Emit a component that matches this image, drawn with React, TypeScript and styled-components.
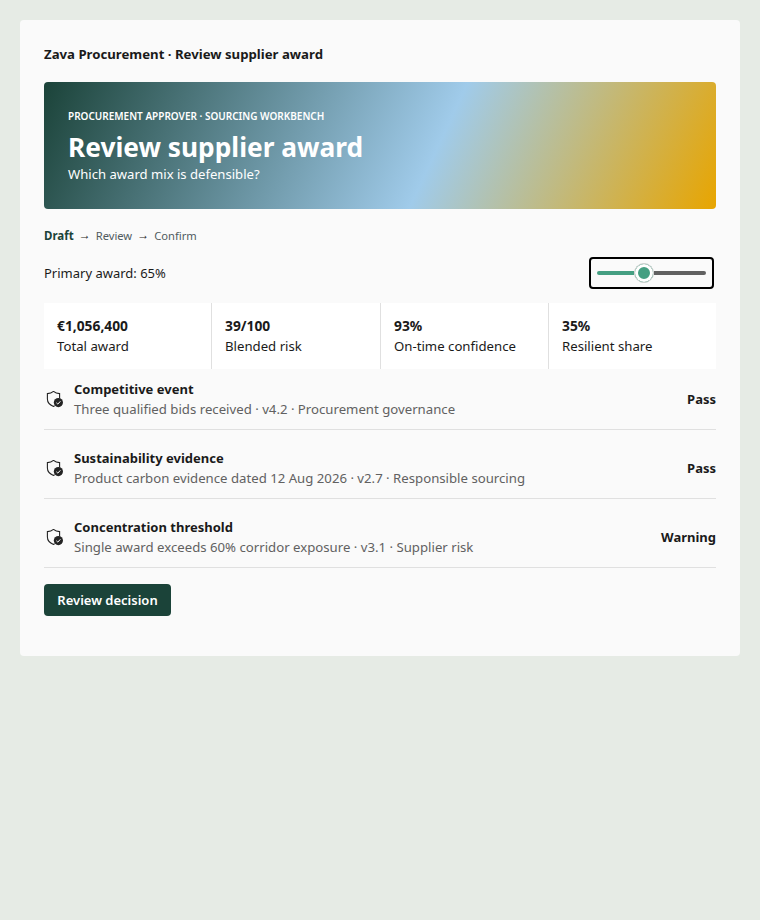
import React from "react";
import styled, { createGlobalStyle } from "styled-components";

const FONT = `"Noto Sans", "Open Sans", "Liberation Sans", sans-serif`;

const GlobalStyle = createGlobalStyle`
  * {
    box-sizing: border-box;
  }
  body {
    margin: 0;
    min-height: 920px;
    background-color: #e6ebe5;
    font-family: ${FONT};
    color: #1a1a1a;
  }
`;

const Page = styled.div`
  padding: 20px;
`;
const Card = styled.main`
  background-color: #fafafa;
  border-radius: 4px;
  padding: 24px;
  height: 636px;
`;
const Title = styled.h1`
  margin: 0 0 18px;
  height: 20px;
  font-size: 13.2px;
  line-height: 20px;
  font-weight: 700;
  color: #1a1a1a;
`;
const Hero = styled.section`
  height: 127px;
  padding: 24px;
  border-radius: 4px;
  color: #fff;
  background: linear-gradient(115deg, #1b4339 0%, #a0cbea 58%, #e8a500 100%);
`;
const Eyebrow = styled.div`
  font-size: 10px;
  line-height: 20px;
  font-weight: 600;
  white-space: nowrap;
`;
const HeroTitle = styled.h2`
  margin: 3px 0 0;
  font-size: 26.3px;
  line-height: 36px;
  font-weight: 700;
`;
const HeroSub = styled.div`
  font-size: 13.1px;
  line-height: 18px;
`;
const Steps = styled.nav`
  display: flex;
  align-items: center;
  gap: 5px;
  height: 18px;
  margin-top: 17px;
  font-size: 11.2px;
  color: #505a60;
`;
const Step = styled.span<{ $active?: boolean }>`
  font-size: ${(props) => (props.$active ? "11.5px" : "11.2px")};
  font-weight: ${(props) => (props.$active ? 700 : 400)};
  color: ${(props) => (props.$active ? "#1b4339" : "#505a60")};
`;
const Arrow = styled.span`
  font-family: "Liberation Sans", sans-serif;
  font-size: 12px;
  color: #1a1a1a;
`;
const AwardRow = styled.div`
  display: flex;
  justify-content: space-between;
  align-items: center;
  height: 32px;
  margin-top: 13px;
  padding-right: 2px;
  font-size: 13px;
`;
const SliderBox = styled.div`
  display: flex;
  align-items: center;
  width: 125px;
  height: 32px;
  padding: 0 6px;
  border: 2px solid #000;
  border-radius: 4px;
`;
const TrackFill = styled.div`
  width: 37px;
  height: 4px;
  background-color: #459f82;
  border-radius: 2px 0 0 2px;
`;
const TrackRest = styled.div`
  flex: 1;
  height: 4px;
  background-color: #616161;
  border-radius: 0 2px 2px 0;
`;
const Thumb = styled.div`
  width: 20px;
  height: 20px;
  flex-shrink: 0;
  border-radius: 50%;
  background-color: #459f82;
  border: 1px solid #d1d1d1;
  box-shadow: inset 0 0 0 3px #fff;
`;
const Kpis = styled.div`
  display: grid;
  grid-template-columns: 167px 169px 168px 168px;
  height: 66px;
  margin-top: 14px;
  background-color: #fff;
`;
const Kpi = styled.div`
  padding: 13px 13px 0;
  border-left: 1px solid #e0e0e0;
  &:first-child {
    border-left: none;
  }
`;
const KpiValue = styled.div`
  font-size: 13.8px;
  line-height: 20px;
  font-weight: 700;
`;
const KpiLabel = styled.div`
  font-size: 13.2px;
  line-height: 20px;
  white-space: nowrap;
`;
const Check = styled.div`
  display: flex;
  align-items: center;
  height: 69px;
  padding-top: 8px;
  border-bottom: 1px solid #e0e0e0;
  &:first-child {
    height: 61px;
    padding-top: 0;
  }
`;
const CheckIcon = styled.svg`
  width: 20px;
  height: 20px;
  flex-shrink: 0;
  margin-right: 10px;
`;
const CheckText = styled.div`
  flex: 1;
`;
const CheckName = styled.div`
  font-size: 13px;
  line-height: 20px;
  font-weight: 700;
`;
const CheckMeta = styled.div`
  font-size: 13.2px;
  line-height: 20px;
  color: #616161;
`;
const CheckStatus = styled.div`
  font-size: 13px;
  font-weight: 700;
`;
const Primary = styled.button`
  display: block;
  width: 127px;
  height: 32px;
  margin-top: 16px;
  padding: 0;
  border: none;
  border-radius: 4px;
  background-color: #1b4339;
  color: #fff;
  font-family: ${FONT};
  font-size: 13px;
  font-weight: 600;
`;

const kpis = [
  { value: "€1,056,400", label: "Total award" },
  { value: "39/100", label: "Blended risk" },
  { value: "93%", label: "On-time confidence" },
  { value: "35%", label: "Resilient share" },
];

const checks = [
  {
    name: "Competitive event",
    meta: "Three qualified bids received · v4.2 · Procurement governance",
    status: "Pass",
  },
  {
    name: "Sustainability evidence",
    meta: "Product carbon evidence dated 12 Aug 2026 · v2.7 · Responsible sourcing",
    status: "Pass",
  },
  {
    name: "Concentration threshold",
    meta: "Single award exceeds 60% corridor exposure · v3.1 · Supplier risk",
    status: "Warning",
  },
];

function ShieldCheck() {
  return (
    <CheckIcon viewBox="0 0 20 20">
      <path
        d="M9.5 2.4 C7.8 3.8 5.8 4.5 3.4 4.6 V10 C3.4 13.4 5.4 15.8 9.5 17.4 C10 17.2 10.4 17 10.8 16.8 M15.6 9.4 V4.6 C13.2 4.5 11.2 3.8 9.5 2.4"
        fill="none"
        stroke="#242424"
        strokeWidth="1.1"
      />
      <circle cx="14.4" cy="13.6" r="4.6" fill="#242424" />
      <path
        d="M12.4 13.8 L13.8 15.1 L16.4 12.3"
        fill="none"
        stroke="#fff"
        strokeWidth="1"
      />
    </CheckIcon>
  );
}

export default function App() {
  return (
    <Page>
      <GlobalStyle />
      <Card>
        <Title>Zava Procurement · Review supplier award</Title>
        <Hero>
          <Eyebrow>PROCUREMENT APPROVER · SOURCING WORKBENCH</Eyebrow>
          <HeroTitle>Review supplier award</HeroTitle>
          <HeroSub>Which award mix is defensible?</HeroSub>
        </Hero>
        <Steps>
          <Step $active>Draft</Step>
          <Arrow>→</Arrow>
          <Step>Review</Step>
          <Arrow>→</Arrow>
          <Step>Confirm</Step>
        </Steps>
        <AwardRow>
          <span>Primary award: 65%</span>
          <SliderBox>
            <TrackFill />
            <Thumb />
            <TrackRest />
          </SliderBox>
        </AwardRow>
        <Kpis>
          {kpis.map((kpi) => (
            <Kpi key={kpi.label}>
              <KpiValue>{kpi.value}</KpiValue>
              <KpiLabel>{kpi.label}</KpiLabel>
            </Kpi>
          ))}
        </Kpis>
        <div>
          {checks.map((check) => (
            <Check key={check.name}>
              <ShieldCheck />
              <CheckText>
                <CheckName>{check.name}</CheckName>
                <CheckMeta>{check.meta}</CheckMeta>
              </CheckText>
              <CheckStatus>{check.status}</CheckStatus>
            </Check>
          ))}
        </div>
        <Primary>Review decision</Primary>
      </Card>
    </Page>
  );
}
